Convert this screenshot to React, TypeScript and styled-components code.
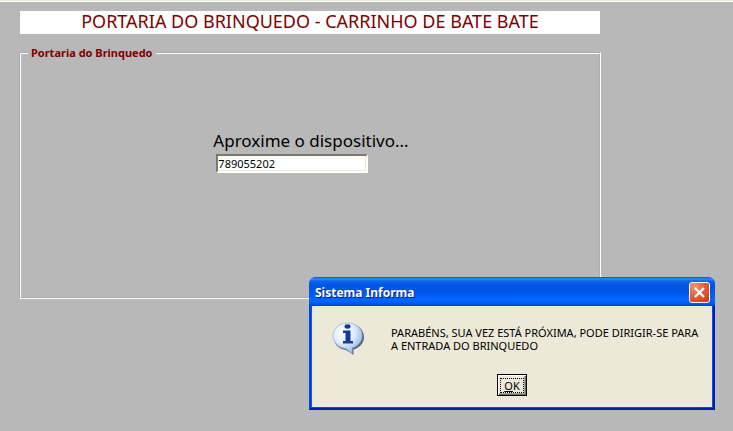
import React, { useState } from "react";
import styled, { createGlobalStyle } from "styled-components";

const GlobalStyle = createGlobalStyle`
  *, *::before, *::after { box-sizing: border-box; }
  html, body, #root { height: 100%; }
  body {
    margin: 0;
    background: #b8b8b8;
    color: #000;
    font-family: "Noto Sans", "Open Sans", sans-serif;
    font-size: 11px;
  }
`;

const Page = styled.div`
  position: relative;
  min-height: 100%;
  padding: 9px 133px 16px 20px;
  border-top: 1px solid #ece9d8;
  box-shadow: inset 0 1px 0 #fff;
`;

const Banner = styled.h1`
  margin: 1px 0 12px;
  height: 23px;
  line-height: 20px;
  background: #fff;
  color: #800000;
  font-size: 18px;
  font-weight: 400;
  text-align: center;
  white-space: nowrap;
`;

const Group = styled.fieldset`
  display: flex;
  justify-content: center;
  min-width: 0;
  min-height: 253px;
  margin: 0 -1px;
  padding: 67px 12px 12px;
  border: 2px groove #fff;
`;

const Legend = styled.legend`
  margin-left: -5px;
  padding: 0 3px;
  color: #800000;
  font-size: 11px;
  line-height: 14px;
  font-weight: 700;
`;

const Form = styled.form`
  display: flex;
  flex-direction: column;
  align-items: flex-start;
  padding-left: 2px;
`;

const Label = styled.label`
  font-size: 17px;
  line-height: 27px;
`;

const Field = styled.input`
  width: 152px;
  height: 19px;
  margin: 0 0 0 3px;
  padding: 0;
  border: 2px solid;
  border-color: #7c786c #fffff8 #fffff8 #7c786c;
  border-radius: 0;
  outline: 0;
  background: #fff;
  color: #000;
  box-shadow: inset -1px -1px 0 #ece9d8;
  font: 11px "Noto Sans", sans-serif;
`;

const Dialog = styled.section`
  position: absolute;
  top: 276px;
  right: 18px;
  width: 406px;
  border: 2px solid;
  border-color: #0048f0 #001cb0 #001cb0 #0040e4;
  border-top: 0;
  border-radius: 7px 7px 0 0;
  background: #ece9d8;
  box-shadow: inset -1px -1px 0 #0050ee, inset 1px 0 0 #0058f8;
`;

const TitleBar = styled.header`
  display: flex;
  align-items: center;
  justify-content: space-between;
  height: 29px;
  margin: 0 -2px;
  padding: 2px 5px 0 6px;
  border-radius: 7px 7px 0 0;
  background: linear-gradient(#0a50c8 0, #2f8cff 2px, #0a65f0 4px, #0055e5 8px, #0055e5 14px, #0066ff 22px, #0062f8 25px, #0045d0 29px);
`;

const DialogTitle = styled.h2`
  margin: 0;
  color: #fff;
  font-size: 12px;
  line-height: 18px;
  font-weight: 700;
  text-shadow: 1px 1px 0 #0a1883;
`;

const CloseButton = styled.button`
  display: flex;
  align-items: center;
  justify-content: center;
  width: 21px;
  height: 21px;
  padding: 0;
  border: 1px solid #fff;
  border-radius: 3px;
  background: radial-gradient(circle at 25% 20%, #f09478 0, #e25a36 50%, #c8330c 100%);
`;

const Body = styled.div`
  display: grid;
  grid-template-columns: 32px 1fr;
  column-gap: 27px;
  padding: 16px 9px 18px 21px;
`;

const Message = styled.p`
  margin: 4px 0 0;
  line-height: 13px;
`;

const Actions = styled.div`
  display: flex;
  justify-content: center;
  padding-bottom: 12px;
`;

const OkButton = styled.button`
  width: 30px;
  height: 22px;
  padding: 2px;
  border: 1px solid #000;
  box-shadow: inset 1px 1px 0 #fff, inset -1px -1px 0 #716f64, inset -2px -2px 0 #aca899;
  background: #ece9d8;
  color: #000;
  font: 11px "Noto Sans", sans-serif;
`;

const FocusRing = styled.span`
  display: block;
  height: 15px;
  border: 1px dotted #000;
  line-height: 13px;
`;

function InfoIcon() {
  return (
    <svg width="32" height="34" viewBox="0 0 32 34" aria-hidden="true">
      <defs>
        <radialGradient id="bubble" cx="38%" cy="30%" r="70%">
          <stop offset="0" stopColor="#fff" />
          <stop offset="0.5" stopColor="#e2f0ff" />
          <stop offset="1" stopColor="#91bbed" />
        </radialGradient>
      </defs>
      <path d="M18 2c8 0 14 6 14 13 0 6-4 10.500-10.500 12.500V33l-7.500-5C7 27 2 23 2 16 2 8 9 2 18 2z" fill="#3f4d6b" opacity=".85" />
      <path d="M15.500 1C24 1 30 6.500 30 13.500c0 6-4 10.500-10 12.300v5.700l-6-5C6.500 26 1 20.500 1 13.500 1 6.700 7.500 1 15.500 1z" fill="url(#bubble)" stroke="#a3b9d5" strokeWidth=".8" />
      <ellipse cx="15.500" cy="4.500" rx="3" ry="2.200" fill="#103b99" />
      <path d="M11 8.500h7.500V19H21v2.500H11V19h2.500v-8H11z" fill="#103b99" />
    </svg>
  );
}

export default function App() {
  const [open, setOpen] = useState(true);
  const [code, setCode] = useState("789055202");
  const close = () => setOpen(false);

  return (
    <>
      <GlobalStyle />
      <Page>
        <Banner>PORTARIA DO BRINQUEDO - CARRINHO DE BATE BATE</Banner>
        <Group>
          <Legend>Portaria do Brinquedo</Legend>
          <Form onSubmit={(event) => event.preventDefault()}>
            <Label htmlFor="device">Aproxime o dispositivo...</Label>
            <Field id="device" value={code} onChange={(event) => setCode(event.target.value)} />
          </Form>
        </Group>
        {open && (
          <Dialog role="dialog" aria-labelledby="dialog-title" aria-describedby="dialog-message">
            <TitleBar>
              <DialogTitle id="dialog-title">Sistema Informa</DialogTitle>
              <CloseButton type="button" aria-label="Fechar" onClick={close}>
                <svg width="13" height="13" viewBox="0 0 13 13" aria-hidden="true">
                  <path d="M2 2l9 9M11 2l-9 9" stroke="#fff" strokeWidth="2.200" />
                </svg>
              </CloseButton>
            </TitleBar>
            <Body>
              <InfoIcon />
              <Message id="dialog-message">
                PARABÉNS, SUA VEZ ESTÁ PRÓXIMA, PODE DIRIGIR-SE PARA A ENTRADA DO BRINQUEDO
              </Message>
            </Body>
            <Actions>
              <OkButton type="button" onClick={close}>
                <FocusRing><u>O</u>K</FocusRing>
              </OkButton>
            </Actions>
          </Dialog>
        )}
      </Page>
    </>
  );
}
